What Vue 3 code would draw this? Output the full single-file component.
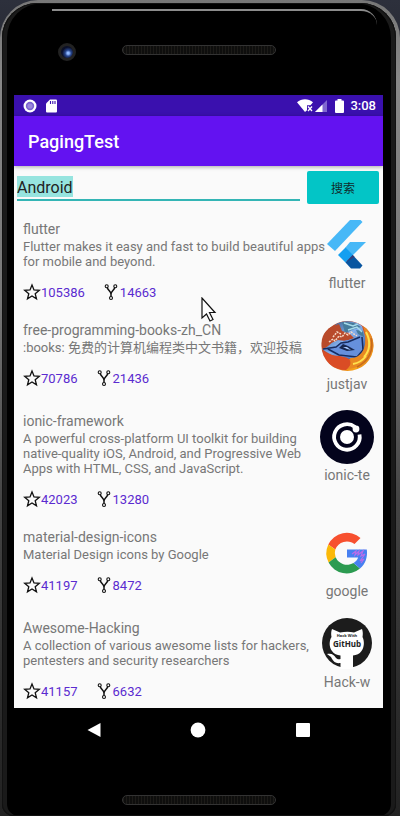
<script setup>
import { ref } from 'vue'

const query = ref('Android')

const repos = [
  { name: 'flutter', lines: ['Flutter makes it easy and fast to build beautiful apps', 'for mobile and beyond.'], stars: 105386, forks: 14663, owner: 'flutter' },
  { name: 'free-programming-books-zh_CN', lines: [':books: 免费的计算机编程类中文书籍，欢迎投稿'], stars: 70786, forks: 21436, owner: 'justjav' },
  { name: 'ionic-framework', lines: ['A powerful cross-platform UI toolkit for building', 'native-quality iOS, Android, and Progressive Web', 'Apps with HTML, CSS, and JavaScript.'], stars: 42023, forks: 13280, owner: 'ionic-te' },
  { name: 'material-design-icons', lines: ['Material Design icons by Google'], stars: 41197, forks: 8472, owner: 'google' },
  { name: 'Awesome-Hacking', lines: ['A collection of various awesome lists for hackers,', 'pentesters and security researchers'], stars: 41157, forks: 6632, owner: 'Hack-w' }
]
</script>

<template>
  <div class="phone">
    <div class="face">
      <div class="bezel-top">
        <span class="camera"></span>
        <span class="speaker"></span>
      </div>

      <main class="screen">
        <div class="status">
          <svg class="s-icon" width="14" height="14" viewBox="0 0 14 14"><circle cx="7" cy="7" r="6.5" fill="#fff" /><circle cx="7" cy="7" r="4.2" fill="#7a62cf" /><circle cx="7" cy="7" r="2.6" fill="#9a87dc" /></svg>
          <svg class="s-icon" width="11" height="14" viewBox="0 0 11 14"><path d="M4 .5h6a1 1 0 0 1 1 1v11a1 1 0 0 1-1 1H1a1 1 0 0 1-1-1V4.5z" fill="#fff" /><path d="M4.500 2v3M6.800 2v3M9 2v3" stroke="#3a10ae" stroke-width="1.1" /></svg>
          <span class="grow"></span>
          <svg width="16" height="13" viewBox="0 0 16 13"><path d="M0 3.2C4.5-.7 11.5-.7 16 3.2L13.5 6.3H10v5L8 13z" fill="#fff" /><path d="M11 7.5l4 4.5M15 7.5l-4 4.5" stroke="#fff" stroke-width="1.3" /></svg>
          <svg class="signal" width="12" height="12" viewBox="0 0 12 12"><path d="M12 0v12H0z" fill="#7f66d0" /><path d="M7.5 4.5V12H0z" fill="#fff" /></svg>
          <svg class="battery" width="9" height="14" viewBox="0 0 9 14"><path d="M2.5 0h4v1.5H8a1 1 0 0 1 1 1V13a1 1 0 0 1-1 1H1a1 1 0 0 1-1-1V2.5a1 1 0 0 1 1-1h1.5z" fill="#fff" /></svg>
          <time class="clock">3:08</time>
        </div>

        <header class="appbar"><h1>PagingTest</h1></header>

        <form class="search" @submit.prevent>
          <div class="field">
            <label class="sizer" for="query">{{ query }}</label>
            <input id="query" v-model="query" type="text" />
          </div>
          <button type="submit">搜索</button>
        </form>

        <ul class="list">
          <li v-for="repo in repos" :key="repo.name" class="item">
            <div class="info">
              <h2>{{ repo.name }}</h2>
              <p class="desc"><span v-for="line in repo.lines" :key="line">{{ line }}</span></p>
              <div class="stats">
                <span class="stat">
                  <svg width="18" height="18" viewBox="0 0 18 18"><path d="M9 2l2 4.900 5.300.4-4.100 3.400 1.300 5.100L9 13l-4.500 2.800 1.300-5.100L1.700 7.300 7 6.900z" fill="none" stroke="#111" stroke-width="1.300" /></svg>
                  <span>{{ repo.stars }}</span>
                </span>
                <span class="stat">
                  <svg width="16" height="18" viewBox="0 0 16 18"><g fill="none" stroke="#111" stroke-width="1.1"><circle cx="2.700" cy="3.200" r="1.500" /><circle cx="11.300" cy="3.200" r="1.500" /><circle cx="7" cy="15" r="1.500" /><path d="M3.300 4.700C4 7.500 7 8.500 7 11v2.500M10.700 4.700C10 7.500 7 8.500 7 11" stroke-width="1.500" /></g></svg>
                  <span>{{ repo.forks }}</span>
                </span>
              </div>
            </div>

            <div class="owner">
              <svg v-if="repo.owner === 'flutter'" width="54" height="54" viewBox="0 0 54 54">
                <path d="M30 2h10.500l2 2L15 33 7 26z" fill="#47b8f7" />
                <path d="M30 24h16L31.500 38.500 25 30z" fill="#47b8f7" />
                <path d="M18 37l7.500-7.500 7.700 7.700-7.700 7.300z" fill="#159ff0" />
                <path d="M25.500 44.500l7.200-7.500L42.500 47.500 40 50.500h-9z" fill="#0855a0" />
                <path d="M25.500 44.500l7.200-7.500 2 2z" fill="#353d78" />
              </svg>

              <svg v-else-if="repo.owner === 'justjav'" width="54" height="54" viewBox="0 0 54 54">
                <defs>
                  <linearGradient id="fox" x1="0" y1="0" x2="1" y2="1"><stop offset="0" stop-color="#a8452a" /><stop offset=".5" stop-color="#d4502a" /><stop offset=".8" stop-color="#f6a51b" /><stop offset="1" stop-color="#b64315" /></linearGradient>
                  <linearGradient id="globe" x1="0" y1="0" x2="1" y2="1"><stop offset="0" stop-color="#234878" /><stop offset=".5" stop-color="#84b0ec" /><stop offset="1" stop-color="#2a4a94" /></linearGradient>
                </defs>
                <ellipse cx="27.500" cy="27" rx="26" ry="25" fill="url(#fox)" />
                <path d="M15 6C22 1 34 1 42 7l3 10c1 10-1 17-7 21-8 4-22 2-36-8 6-1 8-6 14-9l6-7z" fill="url(#globe)" />
                <path d="M2 28C0 18 6 9 14 7l5-2 3 7 7 2 5 5-8 3-8-1-7 3-6 4z" fill="#b84a2b" />
                <path d="M22 3l12 1 7 4-7 2-9 4zM36 11l7 1 1 6-6-3z" fill="#467c9c" />
                <path d="M24 4l9 3 5-2M28 11l9-3 5 5" fill="none" stroke="#a7dceb" stroke-width="1.500" />
                <path d="M9 23l4-3 2 2 4-5 3 1 3-4 3 2 3-3 6 4M13 18l4-5 4 2" fill="none" stroke="#f7d8c5" stroke-width="1.500" stroke-dasharray="2 1" />
                <path d="M3 30l10-2c6-1 9-7 15-7l14-3 1 14-5 7-15-1z" fill="#6690dc" />
                <path d="M3 30l13-2 5-4 7-1 12-5M42 18l1 13-6 7-18-2-11-6" fill="none" stroke="#172c60" stroke-width="1.500" />
                <path d="M19 29l4-4 5 2 7 4-8 1z" fill="#172750" />
                <path d="M23 28h4l4 3-4-1z" fill="#a4c7ff" />
                <path d="M43 7c10 6 13 19 8 29-5 9-13 13-24 14 5-3 5-7 3-11 12 1 20-13 13-32z" fill="#e88922" />
                <path d="M46 13c5 9 4 19-2 25M33 45c6-1 10-4 13-8" fill="none" stroke="#ffe24d" stroke-width="2" />
                <path d="M51 19c3 12-2 23-14 29" fill="none" stroke="#c66a1c" stroke-width="1.500" />
                <path d="M3 32c8 7 19 3 26 8 3 4 1 8-3 11C14 51 5 43 3 32z" fill="#da4c25" />
              </svg>

              <svg v-else-if="repo.owner === 'ionic-te'" width="54" height="54" viewBox="0 0 54 54">
                <circle cx="27" cy="27" r="27" fill="#03031c" />
                <circle cx="27" cy="27" r="7" fill="#fff" />
                <path d="M35 17A12.800 12.800 0 1 0 39.500 24.500" fill="none" stroke="#fff" stroke-width="3.800" />
                <circle cx="36" cy="19" r="3.400" fill="#fff" />
              </svg>

              <svg v-else-if="repo.owner === 'google'" width="54" height="54" viewBox="0 0 54 54">
                <path d="M40.500 12A20.500 20.500 0 0 0 8.300 18.500l7 5A12.600 12.600 0 0 1 34.500 18z" fill="#f7502f" />
                <path d="M8.300 18.500a20.500 20.500 0 0 0 .3 18l7-5.200a12 12 0 0 1-.3-7.800z" fill="#fbb908" />
                <path d="M8.600 36.500a20.500 20.500 0 0 0 31.400 6L33.500 37a12.600 12.600 0 0 1-17.900-5.700z" fill="#2c9b51" />
                <path d="M27 23.500h19.800C47.800 31 45.500 38 40 42.500L33.500 37c2.500-1.500 4-3.400 4.600-5.500H27z" fill="#4780f1" />
                <path d="M32 28l4-3-1 4 4-4-1 4 5-4-2 5 4-2-5 7 4-2-3 4" fill="none" stroke="#b86ce8" stroke-width="1.200" />
              </svg>

              <svg v-else width="54" height="54" viewBox="0 0 54 54">
                <circle cx="27" cy="26" r="25" fill="#1c1c1c" />
                <path d="M12 12l8 3.500c5-1 10-1 14 0l8-3.500c1 3 1 5 .5 8 2 4 2 10-1 14-2 3-5 4-8.500 4.500V52H20.500v-6c-6 1-8-3-9.500-6l-4-3c5-1 7 1 9 4 1.500 1.500 3 1.500 4.500 1v-3.500c-3.500-.5-6.500-1.500-8.500-4.500-3-4-3-10-.5-14-.5-3-.5-5 .5-8z" fill="#fff" />
                <text x="27" y="20" class="logo-small">Hack With</text>
                <text x="27" y="30" class="logo-big">GitHub</text>
              </svg>
              <span class="owner-name">{{ repo.owner }}</span>
            </div>
          </li>
        </ul>

        <svg class="cursor" width="16" height="26" viewBox="0 0 16 26"><path d="M1 1v20l4.500-4 3.500 7 3-1.500-3.500-7H14z" fill="#fff" stroke="#111" stroke-width="1.200" /></svg>
      </main>

      <nav class="nav">
        <button type="button" aria-label="Back"><svg width="16" height="16" viewBox="0 0 16 16"><path d="M14.500 1v14L1.500 8z" fill="#fff" /></svg></button>
        <button type="button" aria-label="Home"><svg width="16" height="16" viewBox="0 0 16 16"><circle cx="8" cy="8" r="7.400" fill="#fff" /></svg></button>
        <button type="button" aria-label="Recents"><svg width="16" height="16" viewBox="0 0 16 16"><rect x="1" y="1" width="14" height="14" rx="1" fill="#fff" /></svg></button>
      </nav>
      <div class="bezel-bottom"><span class="speaker"></span></div>
    </div>
  </div>
</template>

<style>
body { margin: 0; background: linear-gradient(#2d303c, #24262d 100px, #222); }
</style>

<style scoped>
* { box-sizing: border-box; }
.phone {
  display: flex;
  min-height: 100vh;
  padding: 3px 4px 0 2px;
  background: linear-gradient(#777, #888 80px, #777 300px, #444 500px, #2c2c2c 700px, #222);
  border-radius: 38px 38px 0 0;
  font-family: Roboto, "Noto Sans CJK SC", sans-serif;
}
.face {
  display: flex;
  flex: 1;
  flex-direction: column;
  min-width: 0;
  padding: 0 13px 0 12px;
  background: #000;
  border-radius: 35px 35px 12px 12px;
  box-shadow: inset 0 0 0 1px #111, inset 5px 0 0 #1a1a1a, inset -5px 0 0 #1a1a1a;
}
.bezel-top {
  position: relative;
  display: grid;
  grid-template-columns: 1fr 154px 1fr;
  align-items: start;
  height: 92px;
  padding: 40px 0 0;
}
.bezel-top::before {
  position: absolute;
  top: 6px;
  left: 38px;
  right: 6px;
  height: 14px;
  border-top: 2px solid #8c8c8c;
  border-radius: 0 26px 0 0;
  content: "";
}
.camera {
  width: 18px;
  height: 18px;
  margin-left: 44px;
  border: 3px solid #222;
  border-radius: 50%;
  background: radial-gradient(circle at 60% 60%, #8fb8ff 0 1px, #27458c 3px, #0a0f28 6px);
}
.speaker {
  width: 154px;
  height: 10px;
  margin-top: 2px;
  border: 1px solid #333;
  border-radius: 5px;
  background: repeating-linear-gradient(90deg, #1c1b18 0 1px, #0e0e0d 1px 3px);
}
.screen { position: relative; flex: 1; background: #fafafa; overflow: hidden; }
.status {
  display: flex;
  align-items: center;
  height: 21px;
  padding: 0 7px 0 9px;
  background: #3a10ae;
}
.s-icon { margin-right: 9px; }
.grow { flex: 1; }
.signal { margin-left: 2px; }
.battery { margin: 0 6px 0 8px; }
.clock { color: #fff; font-size: 13px; font-weight: 500; }
.appbar {
  display: flex;
  align-items: center;
  height: 50px;
  padding: 0 14px;
  background: #6312f1;
  box-shadow: 0 1px 4px #0005;
}
h1 { margin: 0; color: #fff; font-size: 18px; font-weight: 500; }
.search {
  display: flex;
  align-items: flex-start;
  gap: 7px;
  padding: 5px 4px 0 3px;
}
.field { position: relative; flex: 1; height: 30px; padding-top: 6px; border-bottom: 2px solid #34b5b5; }
.sizer {
  position: absolute;
  left: 0;
  top: 5px;
  height: 21px;
  background: #96e4df;
  color: transparent;
  font-size: 16px;
}
.field input {
  position: relative;
  display: block;
  width: 100%;
  height: 21px;
  padding: 0;
  border: 0;
  outline: 0;
  background: transparent;
  color: #222;
  font-family: inherit;
  font-size: 16px;
}
.search button {
  width: 72px;
  height: 33px;
  padding: 0;
  border: 0;
  border-radius: 2px;
  background: #03c5c6;
  color: #102c2d;
  font-family: inherit;
  font-size: 12px;
}
.list { margin: 0; padding: 10px 9px 0; list-style: none; }
.item {
  display: grid;
  grid-template-columns: 1fr 54px;
  min-height: 91px;
  padding-bottom: 14px;
}
.item:last-child { padding-bottom: 8px; }
.info { min-width: 0; padding-top: 5px; }
h2 {
  margin: 0;
  color: #777;
  font-size: 14px;
  font-weight: 400;
  line-height: 20px;
}
.desc { margin: 0; color: #777; font-size: 13px; line-height: 15px; }
.desc span { display: block; white-space: nowrap; }
.stats { display: flex; gap: 19px; margin-top: 14px; height: 18px; }
.stat { display: flex; align-items: center; color: #5a2bd0; font-size: 13px; }
.owner { display: flex; flex-direction: column; align-items: center; height: 77px; }
.owner-name { color: #777; font-size: 14px; line-height: 22px; white-space: nowrap; }
.owner svg { flex: none; margin-top: 4px; }
.logo-small { font: 700 4px "Open Sans", sans-serif; text-anchor: middle; fill: #222; }
.logo-big { font: 700 8px "Open Sans", sans-serif; text-anchor: middle; fill: #222; }
.cursor { position: absolute; left: 187px; top: 202px; }
.nav {
  display: flex;
  justify-content: space-around;
  height: 43px;
  padding: 0 28px;
}
.nav button { display: flex; align-items: center; padding: 0; border: 0; background: none; }
.bezel-bottom { display: flex; justify-content: center; height: 65px; padding: 42px 0 0; }
</style>
